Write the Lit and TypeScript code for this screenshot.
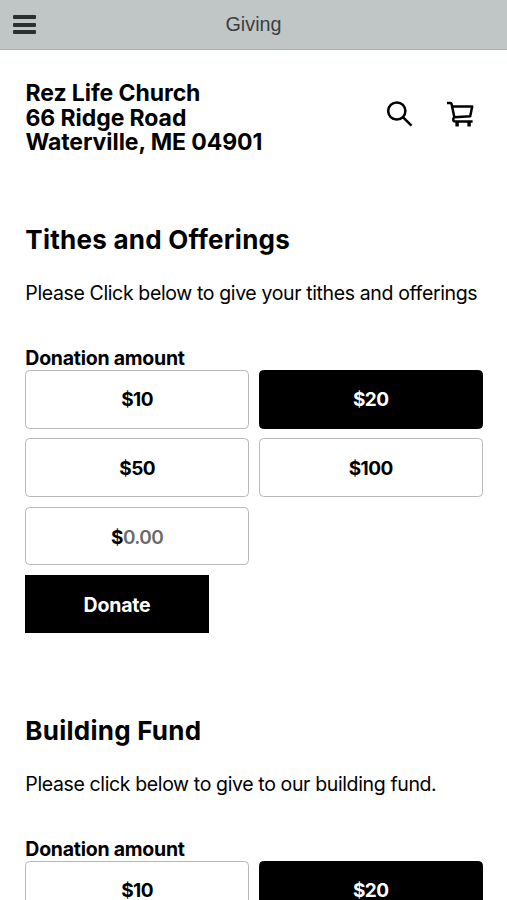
import { LitElement, html, css, svg } from "lit";
import { customElement, property } from "lit/decorators.js";
import { classMap } from "lit/directives/class-map.js";

@customElement("top-bar")
class TopBar extends LitElement {
  @property() heading = "";
  static styles = css`
    :host {
      display: grid;
      grid-template-columns: 1fr auto 1fr;
      align-items: center;
      box-sizing: border-box;
      height: 50px;
      padding: 0 13px 2px;
      background: #c0c6c6;
      border-bottom: 1px solid #adb1b1;
    }
    .menu {
      display: grid;
      gap: 3.5px;
      width: 22.5px;
      margin-top: 2px;
    }
    .line {
      height: 4px;
      border-radius: 1px;
      background: #2b2f30;
    }
    .heading {
      font: 19.8px/24px "Liberation Sans", Arial, sans-serif;
      color: #3a3e3f;
    }
  `;
  render() {
    return html`
      <div class="menu"><div class="line"></div><div class="line"></div><div class="line"></div></div>
      <div class="heading">${this.heading}</div>
    `;
  }
}

@customElement("donation-form")
class DonationForm extends LitElement {
  @property() heading = "";
  @property() blurb = "";
  @property({ type: Number }) selected = 20;
  static styles = css`
    :host {
      display: block;
      height: 491px;
    }
    h2 {
      margin: 0 0 24px;
      font-size: 26px;
      line-height: 32px;
      font-weight: 700;
      letter-spacing: 0.25px;
      white-space: nowrap;
    }
    p {
      margin: 0 0 40px;
      font-size: 19.5px;
      line-height: 26px;
      letter-spacing: -0.37px;
      white-space: nowrap;
    }
    .label {
      height: 24px;
      font-size: 19.5px;
      line-height: 24px;
      font-weight: 700;
      letter-spacing: -0.25px;
    }
    .amounts {
      display: grid;
      grid-template-columns: 1fr 1fr;
      grid-auto-rows: 58.5px;
      gap: 9.8px 10px;
    }
    .amount {
      display: flex;
      align-items: center;
      justify-content: center;
      box-sizing: border-box;
      border: 1.5px solid #b8b8b8;
      border-radius: 4.5px;
      font-size: 19px;
      font-weight: 700;
      letter-spacing: -0.6px;
      padding-top: 1px;
    }
    .on {
      background: #000;
      border-color: #000;
      color: #fff;
    }
    .custom {
      padding-top: 3px;
    }
    .hint {
      color: #6b6b6b;
      font-weight: 600;
    }
    .donate {
      display: flex;
      align-items: center;
      justify-content: center;
      box-sizing: border-box;
      width: 183.5px;
      height: 58.5px;
      padding-top: 2px;
      margin-top: 9.8px;
      background: #000;
      color: #fff;
      font-size: 19.5px;
      font-weight: 700;
      letter-spacing: -0.2px;
    }
  `;
  render() {
    return html`
      <h2>${this.heading}</h2>
      <p>${this.blurb}</p>
      <div class="label">Donation amount</div>
      <div class="amounts">
        ${[10, 20, 50, 100].map(
          (n) => html`<div class=${classMap({ amount: true, on: n === this.selected })}>$${n}</div>`
        )}
        <div class="amount custom"><span>$</span><span class="hint">0.00</span></div>
      </div>
      <div class="donate">Donate</div>
    `;
  }
}

const searchIcon = svg`<circle cx="9.8" cy="10" r="8.6"/><path d="M16.1 16.3L24.5 24.7"/>`;
const cartIcon = svg`<path d="M0 2.1H3.3Q4.4 2.1 4.7 3.4L7.4 16.6M5.2 5.4H25.2L23.2 15.3L7.2 16.2Q6.2 17 6.3 18.8Q6.5 20.4 8.2 20.4H25.6"/><path d="M10.1 20.8V25.4M22.1 20.8V25.4" stroke-width="3.4"/>`;

@customElement("app-root")
class AppRoot extends LitElement {
  static styles = css`
    :host {
      display: block;
      height: 900px;
      overflow: hidden;
      background: #fff;
      color: #000;
      font-family: Inter, "Liberation Sans", sans-serif;
    }
    .site {
      display: flex;
      justify-content: space-between;
      align-items: center;
      height: 74px;
      padding: 31px 33.5px 0 25.5px;
    }
    .name {
      font-size: 23px;
      line-height: 24.6px;
      font-weight: 700;
      letter-spacing: -0.08px;
      white-space: nowrap;
    }
    .icons {
      display: flex;
      gap: 33px;
      margin-bottom: 8px;
    }
    svg {
      display: block;
      width: 27px;
      height: 27px;
      fill: none;
      stroke: #000;
      stroke-width: 2.5;
      stroke-linejoin: round;
    }
    main {
      padding: 69px 24.5px 0 25.3px;
    }
  `;
  render() {
    return html`
      <top-bar heading="Giving"></top-bar>
      <div class="site">
        <div class="name">Rez Life Church<br />66 Ridge Road<br />Waterville, ME 04901</div>
        <div class="icons">
          <svg viewBox="0 0 27 27">${searchIcon}</svg>
          <svg viewBox="0 0 27 27">${cartIcon}</svg>
        </div>
      </div>
      <main>
        <donation-form
          heading="Tithes and Offerings"
          blurb="Please Click below to give your tithes and offerings"
        ></donation-form>
        <donation-form
          heading="Building Fund"
          blurb="Please click below to give to our building fund."
        ></donation-form>
      </main>
    `;
  }
}
